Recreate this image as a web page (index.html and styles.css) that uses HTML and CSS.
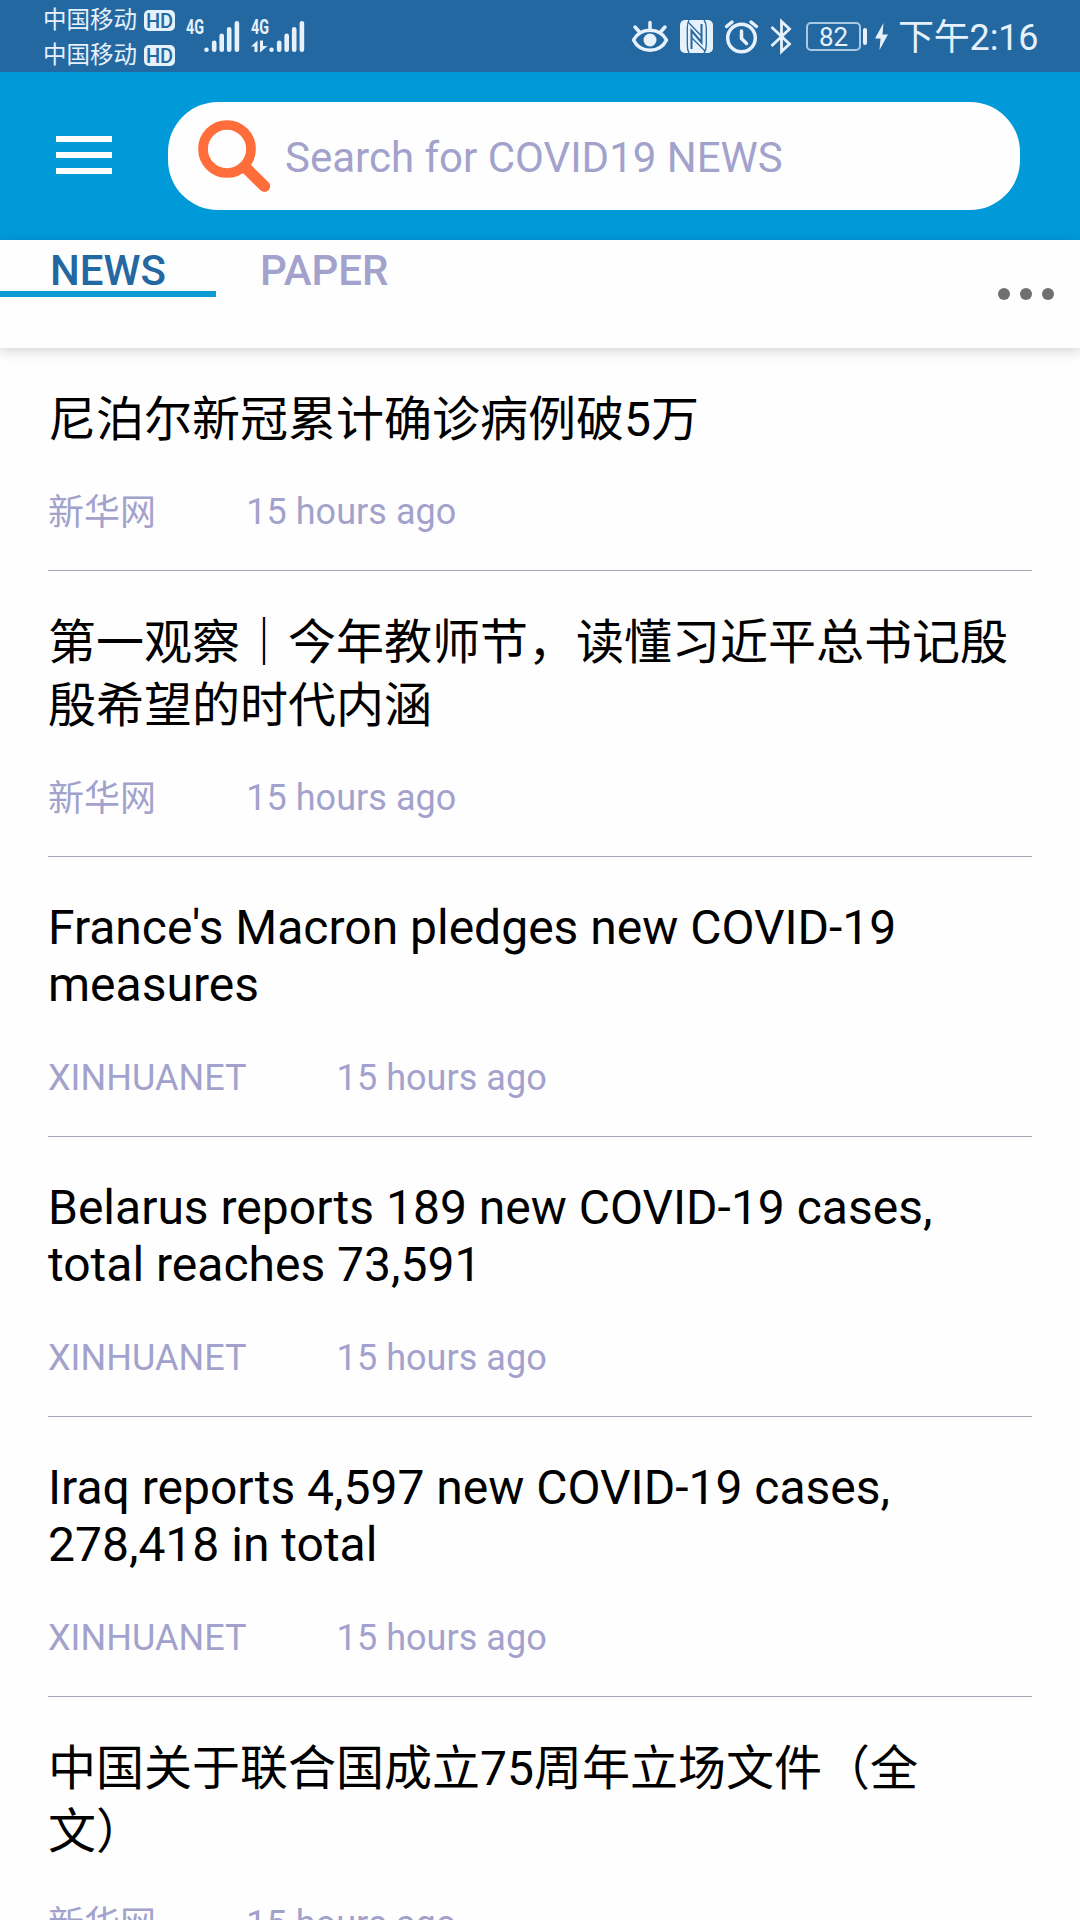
FILE: index.html
```html
<!DOCTYPE html>
<html lang="zh-CN">
<head>
<meta charset="utf-8">
<title>COVID19 News</title>
<link rel="stylesheet" href="styles.css">
</head>
<body>
<div class="status">
  <div class="carriers">
    <div class="carrier"><span>中国移动</span><b class="hd">HD</b></div>
    <div class="carrier"><span>中国移动</span><b class="hd">HD</b></div>
  </div>
  <svg class="signal" width="55" height="36" viewBox="0 0 55 36">
    <text class="net" x="0" y="15.5" textLength="18" lengthAdjust="spacingAndGlyphs">4G</text>
    <path class="bars" d="M20.5 31.7v0M28.2 24.7v7M35.7 17.7v14M43.2 11.2v20.5M50.9 5.2v26.5"/>
  </svg>
  <svg class="signal" width="55" height="36" viewBox="0 0 55 36">
    <text class="net" x="0" y="15.5" textLength="18" lengthAdjust="spacingAndGlyphs">4G</text>
    <path class="fill" d="M0 28.5L6.5 22.5V34H3.5V28.5ZM9 22.500H12V28H16.500L9 34.500Z"/>
    <path class="bars" d="M20.5 31.7v0M28.2 24.7v7M35.7 17.7v14M43.2 11.2v20.5M50.9 5.2v26.5"/>
  </svg>
  <div class="tray">
    <svg class="eye" width="36" height="33" viewBox="0 0 36 33">
      <path class="line" d="M1.5 20C5 13.5 11 10.3 18 10.3S31 13.5 34.5 20C31 27 25 30.2 18 30.2S5 27 1.5 20ZM18 9V2.500M7.500 12L3 7M28.500 12L33 7"/>
      <circle class="fill" cx="18" cy="20" r="6.5"/>
    </svg>
    <svg class="nfc" width="33" height="33" viewBox="0 0 33 33">
      <rect class="fill" width="33" height="33" rx="5"/>
      <path class="cut" d="M9 0Q7.300 3 7.300 8V25Q7.300 30 9 33M24 0Q26.300 3 26.300 8V25Q26.300 30 24 33"/>
      <path class="cut wide" d="M11.500 29V10.500L21.500 22.500V4"/>
      <path class="cut" d="M8 2L21 15.500M12 18L25 31"/>
    </svg>
    <svg class="alarm" width="33" height="33" viewBox="0 0 33 33">
      <circle class="line" cx="16.5" cy="18" r="13.8"/>
      <path class="line" d="M16.5 11V18.5L21.5 23.5M1.5 6.5L7 2M31.5 6.5L26 2"/>
    </svg>
    <svg class="bluetooth" width="22" height="35" viewBox="0 0 22 35">
      <path class="line thin" d="M1.5 8L19.5 25L11.5 32.5V2.500L19.500 10L1.500 27"/>
    </svg>
    <div class="battery"><span>82</span></div>
    <i class="battery-tip"></i>
    <svg class="bolt" width="13" height="27" viewBox="0 0 13 27">
      <path class="fill" d="M8.500 0L0 15.500H5.500L4.500 27L13 11.500H7.500Z"/>
    </svg>
    <span class="clock">下午2:16</span>
  </div>
</div>

<header class="header">
  <div class="menu"><i></i><i></i><i></i></div>
  <div class="search">
    <svg class="glass" width="74" height="74" viewBox="0 0 74 74">
      <circle cx="29" cy="29" r="24" fill="none" stroke="#ff6d3a" stroke-width="9.7"/>
      <path d="M49 49L66.5 66.3" stroke="#ff6d3a" stroke-width="11.4" stroke-linecap="round"/>
    </svg>
    <span class="hint">Search for COVID19 NEWS</span>
  </div>
</header>

<nav class="tabs">
  <div class="tab active">NEWS</div>
  <div class="tab">PAPER</div>
  <div class="more"><i></i><i></i><i></i></div>
</nav>

<main class="list">
  <article class="item cjk"><h2>尼泊尔新冠累计确诊病例破5万</h2><p><span>新华网</span><span>15 hours ago</span></p></article>
  <article class="item cjk"><h2>第一观察<span class="bar">｜</span>今年教师节，读懂习近平总书记殷<br>殷希望的时代内涵</h2><p><span>新华网</span><span>15 hours ago</span></p></article>
  <article class="item"><h2>France's Macron pledges new COVID-19<br>measures</h2><p><span>XINHUANET</span><span>15 hours ago</span></p></article>
  <article class="item"><h2>Belarus reports 189 new COVID-19 cases,<br>total reaches 73,591</h2><p><span>XINHUANET</span><span>15 hours ago</span></p></article>
  <article class="item"><h2>Iraq reports 4,597 new COVID-19 cases,<br>278,418 in total</h2><p><span>XINHUANET</span><span>15 hours ago</span></p></article>
  <article class="item cjk"><h2>中国关于联合国成立75周年立场文件（全<br>文）</h2><p><span>新华网</span><span>15 hours ago</span></p></article>
</main>
</body>
</html>
```
FILE: styles.css
```css
* { box-sizing: border-box; margin: 0; padding: 0; }

body {
  width: 1080px;
  height: 1920px;
  overflow: hidden;
  display: flex;
  flex-direction: column;
  background: #fefefe;
  color: #000;
  font-family: Roboto, "Noto Sans CJK SC", sans-serif;
}

svg { display: block; flex: none; overflow: visible; }

/* Status bar */
.status {
  flex: none;
  display: flex;
  align-items: flex-start;
  height: 72px;
  padding-left: 43px;
  background: #2468a2;
  color: #e6f1fb;
}
.carriers { width: 143px; padding-top: 3px; }
.carrier {
  display: flex;
  align-items: center;
  gap: 7px;
  height: 35px;
  font-size: 23.5px;
  line-height: 35px;
}
.hd {
  width: 31px;
  height: 21px;
  margin-top: -1px;
  border-radius: 5px;
  background: #e6f1fb;
  color: #2468a2;
  font-size: 20px;
  line-height: 22px;
  font-weight: 500;
  text-align: center;
}
.signal { margin-top: 18px; margin-right: 10px; }
.net { font-size: 20px; font-weight: 700; fill: #e6f1fb; }
.bars { fill: none; stroke: #e6f1fb; stroke-width: 4.6; stroke-linecap: round; }
.fill { fill: #e6f1fb; }
.line { fill: none; stroke: #e6f1fb; stroke-width: 3.5; stroke-linecap: round; stroke-linejoin: round; }
.thin { stroke-width: 2.8; stroke-linecap: butt; stroke-linejoin: miter; }
.cut { fill: none; stroke: #2468a2; stroke-width: 1.3; }
.cut.wide { stroke-width: 2; }
.tray {
  display: flex;
  align-items: flex-start;
  width: 448px;
  margin-left: auto;
}
.eye { margin-top: 20px; }
.nfc { margin: 20px 0 0 12px; }
.alarm { margin: 20px 0 0 12px; }
.bluetooth { margin: 19px 0 0 12px; }
.battery {
  flex: none;
  width: 55px;
  height: 29px;
  margin: 22px 0 0 14px;
  border: 2px solid #a9c8e4;
  border-radius: 5px;
  font-size: 26px;
  line-height: 26px;
  text-align: center;
}
.battery-tip {
  flex: none;
  width: 4px;
  height: 17px;
  margin: 28px 0 0 2px;
  border-radius: 2px;
  background: #e6f1fb;
}
.bolt { margin: 23px 0 0 8px; }
.clock {
  margin: 16px 0 0 10px;
  font-size: 36px;
  line-height: 44px;
  letter-spacing: -.2px;
  white-space: nowrap;
}

/* Header */
.header {
  flex: none;
  display: flex;
  height: 168px;
  padding: 30px 60px 0 56px;
  background: #009ad9;
}
.menu {
  display: flex;
  flex-direction: column;
  gap: 10px;
  width: 56px;
  margin: 34px 56px 0 0;
}
.menu i { height: 6px; background: #fff; }
.search {
  flex: 1;
  display: flex;
  height: 108px;
  padding: 18px 0 0 30px;
  border-radius: 50px;
  background: #fefefe;
}
.hint {
  margin: 13px 0 0 13px;
  color: #a2a2cc;
  font-size: 42px;
  line-height: 50px;
  white-space: nowrap;
}

/* Tabs */
.tabs {
  flex: none;
  display: flex;
  position: relative;
  height: 108px;
  background: #fefefe;
  box-shadow: 0 3px 12px rgba(0, 0, 0, .17);
}
.tab {
  width: 216px;
  height: 57px;
  padding: 6px 0 0 44px;
  color: #a2a2cc;
  font-size: 42px;
  line-height: 50px;
  font-weight: 500;
}
.tab.active {
  padding-left: 50px;
  border-bottom: 6px solid #0d9bd3;
  color: #2468a2;
}
.more {
  display: flex;
  gap: 10px;
  margin: 48px 26px 0 auto;
}
.more i { width: 12px; height: 12px; border-radius: 50%; background: #707070; }

/* News list */
.list { flex: none; padding: 0 48px; }
.item {
  padding: 42px 0 36px;
  border-bottom: 1px solid #a4a4b8;
}
.item.cjk { padding-top: 40px; }
.item h2 {
  font-size: 48px;
  line-height: 57px;
  font-weight: 400;
  white-space: nowrap;
}
.item.cjk h2 { line-height: 63px; }
.item p {
  display: flex;
  gap: 90px;
  height: 44px;
  margin-top: 43px;
  color: #a2a2cc;
  font-size: 36px;
  line-height: 44px;
  letter-spacing: .05px;
}
.item.cjk p { margin-top: 39px; }
.item.cjk p span:first-child { line-height: 46px; }
.bar { font-weight: 500; }
```
